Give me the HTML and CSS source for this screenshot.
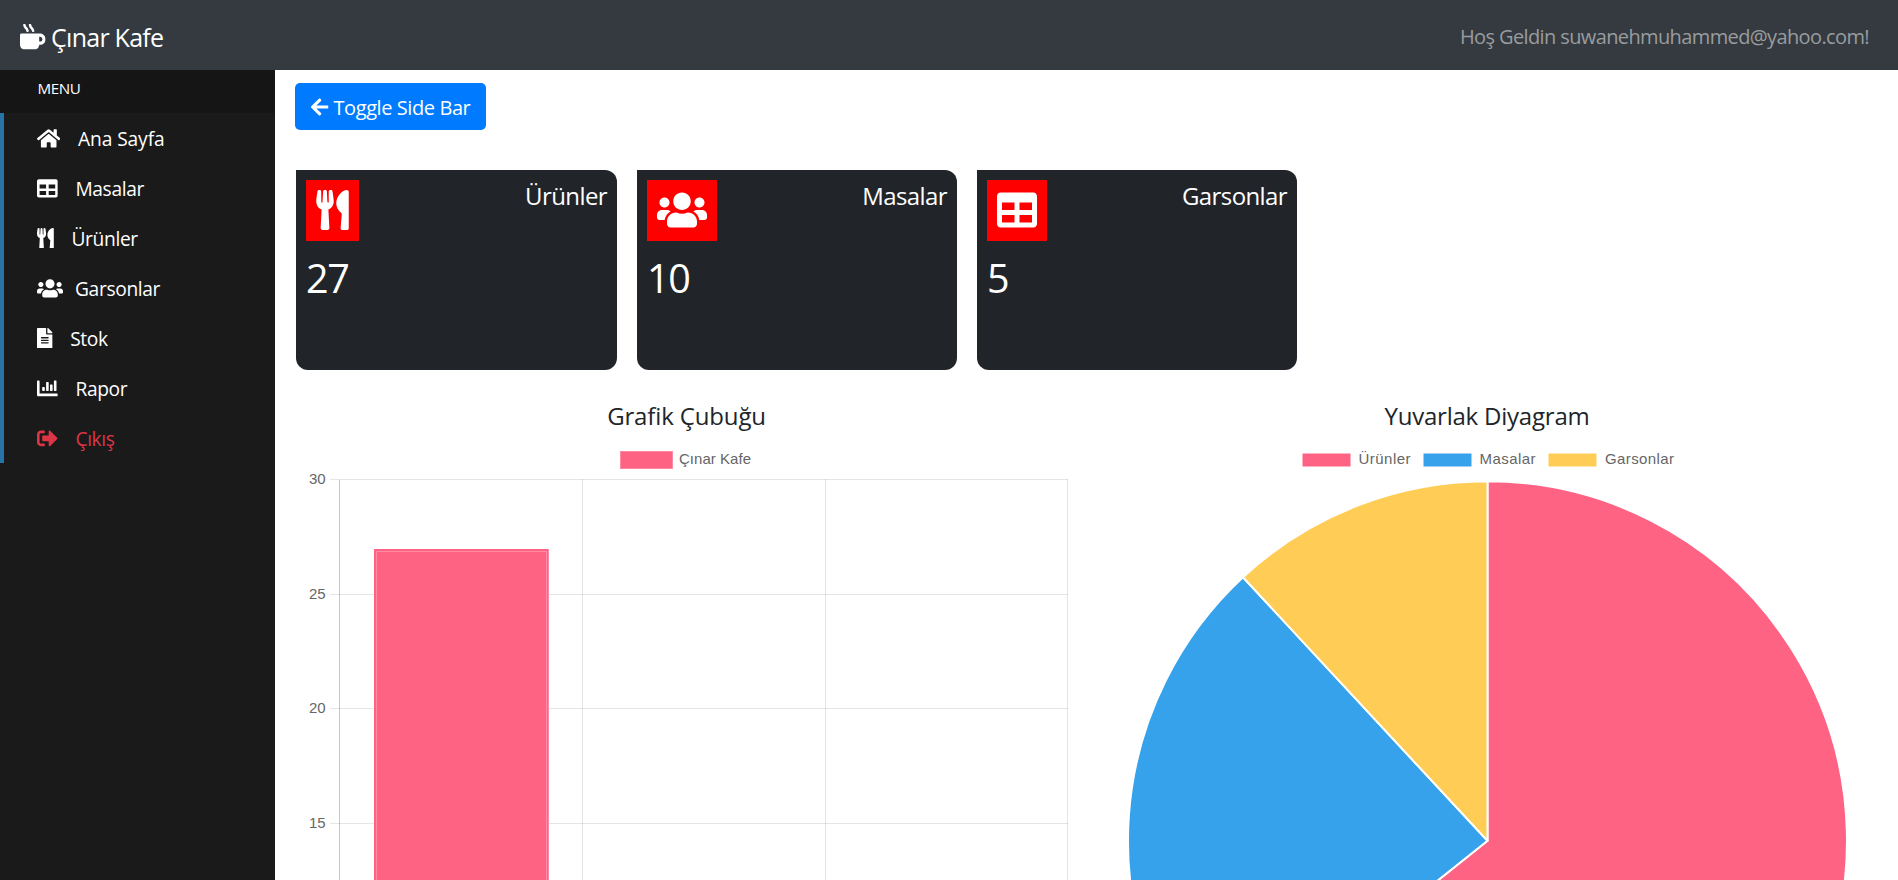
FILE: index.html
```html
<!DOCTYPE html>
<html lang="tr">
<head>
<meta charset="utf-8">
<title>Çınar Kafe</title>
<link rel="stylesheet" href="styles.css">
</head>
<body>
<svg class="symbols" aria-hidden="true">
  <symbol id="home" viewBox="0 0 576 512"><path d="M280.37 148.26L96 300.11V464a16 16 0 0 0 16 16l112.06-.29a16 16 0 0 0 15.92-16V368a16 16 0 0 1 16-16h64a16 16 0 0 1 16 16v95.64a16 16 0 0 0 16 16.05L464 480a16 16 0 0 0 16-16V300L295.67 148.26a12.19 12.19 0 0 0-15.3 0zM571.6 251.47L488 182.56V44.05a12 12 0 0 0-12-12h-56a12 12 0 0 0-12 12v72.61L318.47 43a48 48 0 0 0-61 0L4.34 251.47a12 12 0 0 0-1.6 16.9l25.5 31A12 12 0 0 0 45.15 301l235.22-193.74a12.19 12.19 0 0 1 15.3 0L530.9 301a12 12 0 0 0 16.9-1.6l25.5-31a12 12 0 0 0-1.7-16.93z"/></symbol>
  <symbol id="table" viewBox="0 0 512 512"><path d="M464 32H48C21.49 32 0 53.49 0 80v352c0 26.51 21.49 48 48 48h416c26.51 0 48-21.49 48-48V80c0-26.51-21.49-48-48-48zM224 416H64v-96h160v96zm0-160H64v-96h160v96zm224 160H288v-96h160v96zm0-160H288v-96h160v96z"/></symbol>
  <symbol id="utensils" viewBox="0 0 416 512"><path d="M207.9 15.2c.8 4.7 16.1 94.5 16.1 128.8 0 52.3-27.8 89.6-68.9 104.6L168 486.7c.7 13.7-10.2 25.3-24 25.3H80c-13.7 0-24.7-11.5-24-25.3l12.9-238.1C27.7 233.6 0 196.2 0 144 0 109.6 15.3 19.9 16.1 15.2 19.3-5.1 61.4-5.4 64 16.3v141.2c1.3 3.4 15.1 3.2 16 0 1.4-25.3 7.9-139.2 8-141.8 3.3-20.8 44.7-20.8 47.9 0 .2 2.7 6.6 116.5 8 141.8.9 3.2 14.8 3.4 16 0V16.3c2.6-21.6 44.8-21.4 47.9-1.1zm119.2 285.7l-15 185.1c-1.2 14 9.9 26 23.9 26h56c13.3 0 24-10.7 24-24V24c0-13.2-10.7-24-24-24-82.5 0-221.4 178.5-64.9 300.9z"/></symbol>
  <symbol id="users" viewBox="0 0 640 512"><path d="M96 224c35.3 0 64-28.7 64-64s-28.7-64-64-64-64 28.7-64 64 28.7 64 64 64zm448 0c35.3 0 64-28.7 64-64s-28.7-64-64-64-64 28.7-64 64 28.7 64 64 64zm32 32h-64c-17.6 0-33.5 7.1-45.1 18.6 40.3 22.1 68.9 62 75.1 109.4h66c17.7 0 32-14.3 32-32v-32c0-35.3-28.7-64-64-64zm-256 0c61.9 0 112-50.1 112-112S381.9 32 320 32 208 82.1 208 144s50.1 112 112 112zm76.8 32h-8.3c-20.8 10-43.9 16-68.5 16s-47.6-6-68.5-16h-8.3C179.6 288 128 339.6 128 403.2V432c0 26.5 21.5 48 48 48h288c26.5 0 48-21.5 48-48v-28.8c0-63.6-51.6-115.2-115.2-115.2zm-223.7-13.4C161.5 263.1 145.6 256 128 256H64c-35.3 0-64 28.7-64 64v32c0 17.7 14.3 32 32 32h65.9c6.3-47.4 34.9-87.3 75.2-109.4z"/></symbol>
  <symbol id="file" viewBox="0 0 384 512"><path d="M224 136V0H24C10.7 0 0 10.7 0 24v464c0 13.3 10.7 24 24 24h336c13.3 0 24-10.7 24-24V160H248c-13.2 0-24-10.8-24-24zm64 236c0 6.6-5.4 12-12 12H108c-6.6 0-12-5.4-12-12v-8c0-6.6 5.4-12 12-12h168c6.6 0 12 5.4 12 12v8zm0-64c0 6.6-5.4 12-12 12H108c-6.6 0-12-5.4-12-12v-8c0-6.6 5.4-12 12-12h168c6.6 0 12 5.4 12 12v8zm0-72v8c0 6.6-5.4 12-12 12H108c-6.6 0-12-5.4-12-12v-8c0-6.6 5.4-12 12-12h168c6.6 0 12 5.4 12 12zm96-114.1v6.1H256V0h6.1c6.4 0 12.5 2.5 17 7l97.9 98c4.5 4.5 7 10.6 7 16.9z"/></symbol>
  <symbol id="chart" viewBox="0 0 512 512"><path d="M332.8 320h38.4c6.4 0 12.8-6.4 12.8-12.8V172.8c0-6.4-6.4-12.8-12.8-12.8h-38.4c-6.4 0-12.8 6.4-12.8 12.8v134.4c0 6.4 6.4 12.8 12.8 12.8zm96 0h38.4c6.4 0 12.8-6.4 12.8-12.8V76.8c0-6.4-6.4-12.8-12.8-12.8h-38.4c-6.4 0-12.8 6.4-12.8 12.8v230.4c0 6.4 6.4 12.8 12.8 12.8zm-288 0h38.4c6.4 0 12.8-6.4 12.8-12.8v-70.4c0-6.4-6.4-12.8-12.8-12.8h-38.4c-6.4 0-12.8 6.4-12.8 12.8v70.4c0 6.4 6.4 12.8 12.8 12.8zm96 0h38.4c6.4 0 12.8-6.4 12.8-12.8V108.8c0-6.4-6.4-12.8-12.8-12.8h-38.4c-6.4 0-12.8 6.4-12.8 12.8v198.4c0 6.4 6.4 12.8 12.8 12.8zM496 384H64V80c0-8.84-7.16-16-16-16H16C7.16 64 0 71.16 0 80v336c0 17.67 14.33 32 32 32h464c8.84 0 16-7.16 16-16v-32c0-8.84-7.16-16-16-16z"/></symbol>
  <symbol id="exit" viewBox="0 0 512 512"><path d="M497 273L329 441c-15 15-41 4.5-41-17v-96H152c-13.3 0-24-10.7-24-24v-96c0-13.3 10.7-24 24-24h136V88c0-21.4 25.9-32 41-17l168 168c9.3 9.4 9.3 24.6 0 34zM192 436v-40c0-6.6-5.4-12-12-12H96c-17.7 0-32-14.3-32-32V160c0-17.7 14.3-32 32-32h84c6.6 0 12-5.4 12-12V76c0-6.6-5.4-12-12-12H96c-53 0-96 43-96 96v192c0 53 43 96 96 96h84c6.6 0 12-5.4 12-12z"/></symbol>
  <symbol id="arrow" viewBox="0 0 448 512"><path d="M257.5 445.1l-22.2 22.2c-9.4 9.4-24.6 9.4-33.9 0L7 273c-9.4-9.4-9.4-24.6 0-33.9L201.4 44.7c9.4-9.4 24.6-9.4 33.9 0l22.2 22.2c9.5 9.5 9.3 25-.4 34.3L136.6 216H424c13.3 0 24 10.7 24 24v32c0 13.3-10.7 24-24 24H136.6l120.5 114.8c9.8 9.3 10 24.8.4 34.3z"/></symbol>
  <symbol id="mug" viewBox="0 0 512 512"><path d="M127.1 146.5c1.3 7.7 8 13.5 16 13.5h16.5c9.8 0 17.6-8.5 16.3-18-3.8-28.2-16.4-54.2-36.6-74.7-14.4-14.7-23.6-33.3-26.4-53.5C111.8 5.9 105 0 96.8 0H80.4C70.6 0 63 8.5 64.1 18c3.9 31.9 18 61.3 40.6 84.4 12 12.2 19.7 27.5 22.4 44.1zm112 0c1.3 7.7 8 13.5 16 13.5h16.5c9.8 0 17.6-8.5 16.3-18-3.8-28.2-16.4-54.2-36.6-74.7-14.4-14.7-23.6-33.3-26.4-53.5C223.8 5.9 217 0 208.8 0h-16.4c-9.8 0-17.5 8.5-16.3 18 3.9 31.9 18 61.3 40.6 84.4 12 12.2 19.7 27.5 22.4 44.1zM400 192H32c-17.7 0-32 14.3-32 32v192c0 53 43 96 96 96h192c53 0 96-43 96-96h16c61.8 0 112-50.2 112-112s-50.2-112-112-112zm0 160h-16v-96h16c26.5 0 48 21.5 48 48s-21.5 48-48 48z"/></symbol>
</svg>

<header class="navbar">
  <a class="brand"><svg class="brand-icon"><use href="#mug"/></svg><span>Çınar Kafe</span></a>
  <span class="welcome">Hoş Geldin suwanehmuhammed@yahoo.com!</span>
</header>

<div class="page">
  <aside class="sidebar">
    <div class="menu-title"><span>MENU</span></div>
    <nav class="menu">
      <a class="item"><svg class="i-home"><use href="#home"/></svg><span class="t-home">Ana Sayfa</span></a>
      <a class="item"><svg class="i-sq"><use href="#table"/></svg><span>Masalar</span></a>
      <a class="item"><svg class="i-utensils"><use href="#utensils"/></svg><span>Ürünler</span></a>
      <a class="item tight"><svg class="i-users"><use href="#users"/></svg><span>Garsonlar</span></a>
      <a class="item"><svg class="i-file"><use href="#file"/></svg><span>Stok</span></a>
      <a class="item"><svg class="i-sq"><use href="#chart"/></svg><span>Rapor</span></a>
      <a class="item danger"><svg class="i-sq"><use href="#exit"/></svg><span>Çıkış</span></a>
    </nav>
  </aside>

  <main class="content">
    <button class="toggle"><svg class="toggle-icon"><use href="#arrow"/></svg><span>Toggle Side Bar</span></button>

    <section class="cards">
      <article class="card first">
        <div class="card-top"><div class="badge"><svg class="b-utensils"><use href="#utensils"/></svg></div><h2>Ürünler</h2></div>
        <p>27</p>
      </article>
      <article class="card">
        <div class="card-top"><div class="badge"><svg class="b-users"><use href="#users"/></svg></div><h2>Masalar</h2></div>
        <p>10</p>
      </article>
      <article class="card">
        <div class="card-top"><div class="badge"><svg class="b-table"><use href="#table"/></svg></div><h2>Garsonlar</h2></div>
        <p>5</p>
      </article>
    </section>

    <section class="charts">
      <figure class="chart-bar">
        <figcaption>Grafik Çubuğu</figcaption>
        <svg class="plot" width="792" height="440" viewBox="295 440 792 440">
          <rect class="pink" x="620" y="451" width="53" height="18"/>
          <rect class="edge" x="620.5" y="451.5" width="52" height="17"/>
          <text x="679" y="464" textLength="72">Çınar Kafe</text>
          <g class="grid">
            <path d="M330 479.5H1068M330 594.5H1068M330 708.5H1068M330 823.5H1068"/>
            <path d="M582.5 479V880M825.5 479V880M1067.5 479V880"/>
          </g>
          <path class="axis" d="M339.5 480V880"/>
          <rect class="pink" x="374" y="549" width="175" height="340"/>
          <path class="edge" d="M376.5 889V551.5H546.5V889M548.5 549V889"/>
          <g class="ticks">
            <text x="325.6" y="484">30</text>
            <text x="325.6" y="599">25</text>
            <text x="325.6" y="713">20</text>
            <text x="325.6" y="828">15</text>
          </g>
        </svg>
      </figure>
      <figure class="chart-pie">
        <figcaption>Yuvarlak Diyagram</figcaption>
        <svg class="plot" width="792" height="440" viewBox="1091 440 792 440">
          <rect class="pink" x="1302.5" y="453.5" width="48" height="13"/>
          <text x="1358.5" y="464" textLength="52">Ürünler</text>
          <rect class="blue" x="1423.5" y="453.5" width="48" height="13"/>
          <text x="1479.5" y="464" textLength="56">Masalar</text>
          <rect class="yellow" x="1548.5" y="453.5" width="48" height="13"/>
          <text x="1605" y="464" textLength="69">Garsonlar</text>
          <g class="slices" transform="translate(1487.5 840.8)">
            <path class="pink" d="M0 0V-359.5A359.5 359.5 0 1 1 -281.07 224.15Z"/>
            <path class="blue" d="M0 0L-281.07 224.15A359.5 359.5 0 0 1 -244.52 -263.54Z"/>
            <path class="yellow" d="M0 0L-244.52 -263.54A359.5 359.5 0 0 1 0 -359.5Z"/>
          </g>
        </svg>
      </figure>
    </section>
  </main>
</div>
</body>
</html>
```
FILE: styles.css
```css
* { box-sizing: border-box; }
body {
  margin: 0;
  height: 880px;
  overflow: hidden;
  background: #fff;
  font-family: "Open Sans", "Noto Sans", sans-serif;
  color: #212529;
}
svg { display: block; fill: currentColor; flex: none; }
.symbols { display: none; }

.navbar {
  height: 70px;
  padding: 4px 29px 0 20px;
  display: flex;
  align-items: center;
  justify-content: space-between;
  background: #343a40;
}
.brand { display: flex; align-items: center; gap: 5.5px; color: #fff; font-size: 25px; letter-spacing: -0.75px; }
.brand span { padding-bottom: 1px; }
.brand-icon { width: 25.6px; height: 25.6px; }
.welcome { padding-bottom: 1px; color: #999c9f; font-size: 20px; letter-spacing: -0.62px; }

.page { display: flex; height: 810px; }
.sidebar { width: 275px; flex: none; background: #1a1a1a; color: #fff; }
.menu-title { height: 43px; padding: 7px 0 0 37.5px; background: #151515; font-size: 15.2px; line-height: 22px; letter-spacing: -0.4px; }
.menu { border-left: 4px solid #2874a6; }
.item { display: flex; align-items: center; gap: 17.6px; height: 50px; padding-left: 33px; font-size: 19.2px; letter-spacing: -0.35px; }
.item.tight { gap: 12px; }
.t-home { letter-spacing: -0.1px; }
.danger { color: #dc3545; }
.item svg { height: 20.8px; }
.i-home { width: 23.4px; }
.i-sq { width: 20.8px; }
.i-utensils { width: 16.9px; }
.i-users { width: 26px; }
.i-file { width: 15.6px; }

.content { flex: 1; min-width: 0; padding: 13px 15px 0 20px; }
.toggle {
  display: flex; align-items: center; gap: 5px;
  width: 191px; height: 47px; padding: 0 0 0 16px;
  border: 0; border-radius: 5px;
  background: #007bff; color: #fff;
  font: 20px "Open Sans", sans-serif; letter-spacing: -0.42px; white-space: nowrap;
}
.toggle-icon { width: 17.5px; height: 20px; }
.toggle span { padding-top: 2px; }

.cards { display: flex; gap: 20px; margin: 40px 0 0 1px; }
.card { width: 320px; height: 200px; padding: 10px; background: #212529; color: #fff; border-radius: 0 12px 12px 12px; }
.card.first { width: 321px; }
.card-top { display: flex; justify-content: space-between; align-items: flex-start; }
.badge { height: 61px; padding: 10px; background: #f00; }
.badge svg { height: 40px; }
.b-utensils { width: 33px; }
.b-users { width: 50px; }
.b-table { width: 40px; }
.card h2 { margin: 0; font-weight: 400; font-size: 24px; line-height: 32px; letter-spacing: -0.6px; }
.card p { margin: 7px 0 0; font-size: 39.5px; line-height: 60px; letter-spacing: -1.3px; }

.charts { display: flex; gap: 4px; margin-top: 30px; }
.charts figure { margin: 0; width: 792px; }
figcaption { height: 40px; padding-top: 1px; text-align: center; font-size: 24px; line-height: 30px; letter-spacing: -0.22px; }
.chart-bar figcaption { padding-right: 9px; letter-spacing: -0.14px; }
.plot text { font: 15px "Liberation Sans", Arial, sans-serif; fill: #666; }
.ticks { text-anchor: end; }
.pink { fill: #ff6384; }
.blue { fill: #36a2eb; }
.yellow { fill: #ffcd56; }
.grid path { fill: none; stroke: rgba(0,0,0,.1); }
.axis { fill: none; stroke: rgba(0,0,0,.22); }
.edge { fill: none; stroke: rgba(255,255,255,.25); }
.slices path { stroke: #fff; stroke-width: 2; stroke-linejoin: round; }
```
